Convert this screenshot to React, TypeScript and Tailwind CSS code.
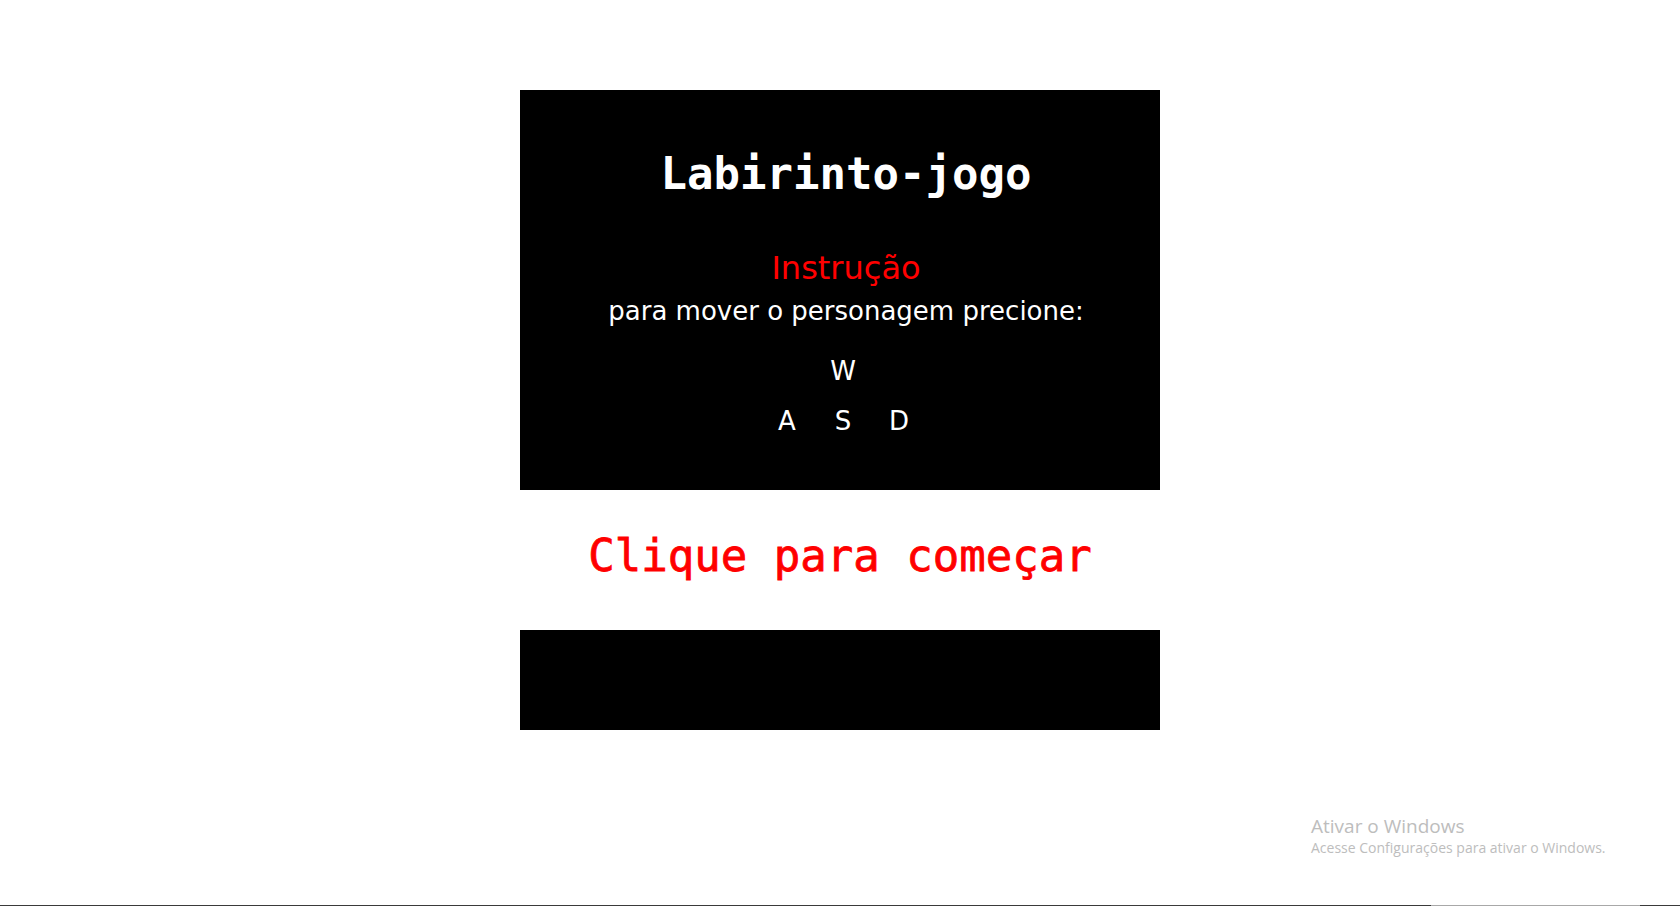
export default function App() {
  const mono = { fontFamily: '"DejaVu Sans Mono", "Liberation Mono", monospace' }
  const sans = { fontFamily: '"DejaVu Sans", Verdana, sans-serif' }

  return (
    <div className="relative flex h-[906px] w-full flex-col overflow-hidden bg-white">
      <main className="flex flex-1 flex-col items-center pt-[90px]">
        {/* painel de instruções */}
        <section className="flex h-[400px] w-[640px] flex-col items-center bg-black pl-3 text-white">
          <h1 className="mt-[58px] text-[44px] font-bold leading-[52px]" style={mono}>
            Labirinto-jogo
          </h1>
          <h2 className="mt-[49px] text-[32px] leading-[38px] text-[#ff0000]" style={sans}>
            Instrução
          </h2>
          <p className="mt-[9px] text-[26px] leading-[30px]" style={sans}>
            para mover o personagem precione:
          </p>
          <div className="mr-[6px] mt-[30px] text-[26px] leading-[30px]" style={sans}>
            W
          </div>
          <div className="mr-[6px] mt-[20px] flex text-[26px] leading-[30px]" style={sans}>
            <span className="w-14 text-center">A</span>
            <span className="w-14 text-center">S</span>
            <span className="w-14 text-center">D</span>
          </div>
        </section>

        <div className="flex h-[140px] w-[640px] justify-center pt-[40px]">
          <p
            className="cursor-pointer text-[44px] leading-[52px] text-[#ff0000] [-webkit-text-stroke:0.8px_#ff0000]"
            style={mono}
          >
            Clique para começar
          </p>
        </div>

        <section className="h-[100px] w-[640px] bg-black" />
      </main>

      <div className="absolute left-[1311px] top-[814px] text-[#bdbdbd]" style={{ fontFamily: '"Open Sans", "Noto Sans", sans-serif' }}>
        <div className="text-[19px] leading-[24px]">Ativar o Windows</div>
        <div className="text-[14px] leading-[20px]">Acesse Configurações para ativar o Windows.</div>
      </div>

      <div className="flex h-px w-full">
        <div className="w-[1431px] bg-[#3a3a3a]" />
        <div className="w-[209px] bg-[#a8a8a8]" />
        <div className="flex-1 bg-[#3a3a3a]" />
      </div>
    </div>
  )
}
